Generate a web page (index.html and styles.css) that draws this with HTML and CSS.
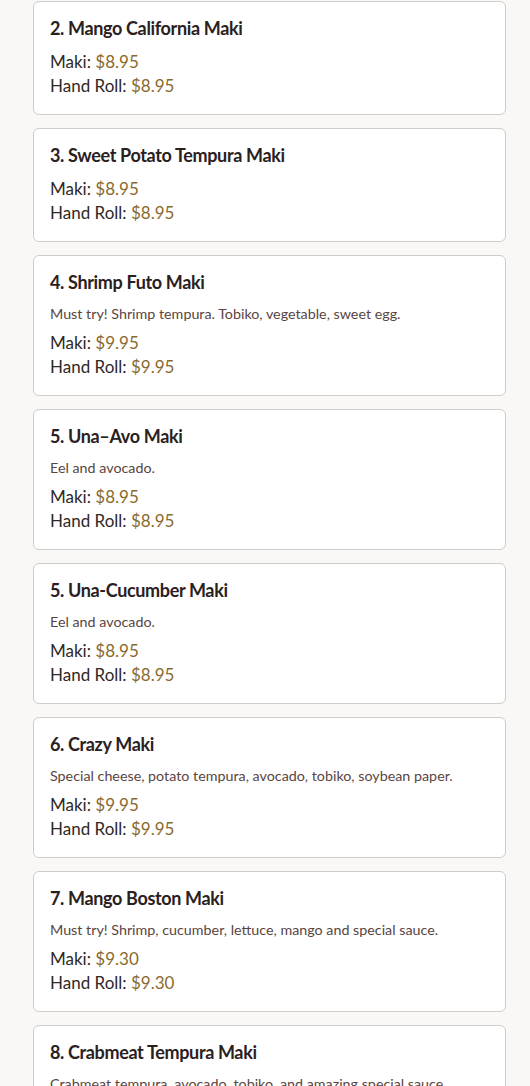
FILE: index.html
```html
<!DOCTYPE html>
<html lang="en">
<head>
<meta charset="utf-8">
<title>Maki Menu</title>
<link rel="stylesheet" href="styles.css">
</head>
<body>
<main class="menu">
  <article class="card">
    <h3 class="title">2. Mango California Maki</h3>
    <p class="price">Maki: <span class="amt">$8.95</span></p>
    <p class="price">Hand Roll: <span class="amt">$8.95</span></p>
  </article>
  <article class="card">
    <h3 class="title">3. Sweet Potato Tempura Maki</h3>
    <p class="price">Maki: <span class="amt">$8.95</span></p>
    <p class="price">Hand Roll: <span class="amt">$8.95</span></p>
  </article>
  <article class="card">
    <h3 class="title">4. Shrimp Futo Maki</h3>
    <p class="desc">Must try! Shrimp tempura. Tobiko, vegetable, sweet egg.</p>
    <p class="price">Maki: <span class="amt">$9.95</span></p>
    <p class="price">Hand Roll: <span class="amt">$9.95</span></p>
  </article>
  <article class="card">
    <h3 class="title">5. Una–Avo Maki</h3>
    <p class="desc">Eel and avocado.</p>
    <p class="price">Maki: <span class="amt">$8.95</span></p>
    <p class="price">Hand Roll: <span class="amt">$8.95</span></p>
  </article>
  <article class="card">
    <h3 class="title">5. Una-Cucumber Maki</h3>
    <p class="desc">Eel and avocado.</p>
    <p class="price">Maki: <span class="amt">$8.95</span></p>
    <p class="price">Hand Roll: <span class="amt">$8.95</span></p>
  </article>
  <article class="card">
    <h3 class="title">6. Crazy Maki</h3>
    <p class="desc">Special cheese, potato tempura, avocado, tobiko, soybean paper.</p>
    <p class="price">Maki: <span class="amt">$9.95</span></p>
    <p class="price">Hand Roll: <span class="amt">$9.95</span></p>
  </article>
  <article class="card">
    <h3 class="title">7. Mango Boston Maki</h3>
    <p class="desc">Must try! Shrimp, cucumber, lettuce, mango and special sauce.</p>
    <p class="price">Maki: <span class="amt">$9.30</span></p>
    <p class="price">Hand Roll: <span class="amt">$9.30</span></p>
  </article>
  <article class="card">
    <h3 class="title">8. Crabmeat Tempura Maki</h3>
    <p class="desc">Crabmeat tempura, avocado, tobiko, and amazing special sauce.</p>
    <p class="price">Maki: <span class="amt">$9.95</span></p>
    <p class="price">Hand Roll: <span class="amt">$9.95</span></p>
  </article>
</main>
</body>
</html>
```
FILE: styles.css
```css
html, body {
  margin: 0;
  padding: 0;
  background: #f9f8f6;
}
body {
  font-family: "Lato", "Open Sans", sans-serif;
  color: #2b2321;
  overflow: hidden;
}
.menu {
  display: flex;
  flex-direction: column;
  gap: 13px;
  padding: 1px 24px 0 33px;
}
.card {
  background: #ffffff;
  border: 1px solid #cfcbc7;
  border-radius: 6px;
  padding: 16px;
}
.title {
  margin: 0 0 12px;
  font-size: 18px;
  line-height: 20px;
  font-weight: 700;
  color: #2a201e;
  letter-spacing: -0.35px;
}
.desc {
  margin: 0 0 7px;
  font-size: 14.3px;
  line-height: 20px;
  color: #5a4541;
}
.price {
  margin: 0;
  font-size: 17px;
  line-height: 24px;
  color: #2f2826;
}
.amt {
  color: #8a6a2c;
}
```
